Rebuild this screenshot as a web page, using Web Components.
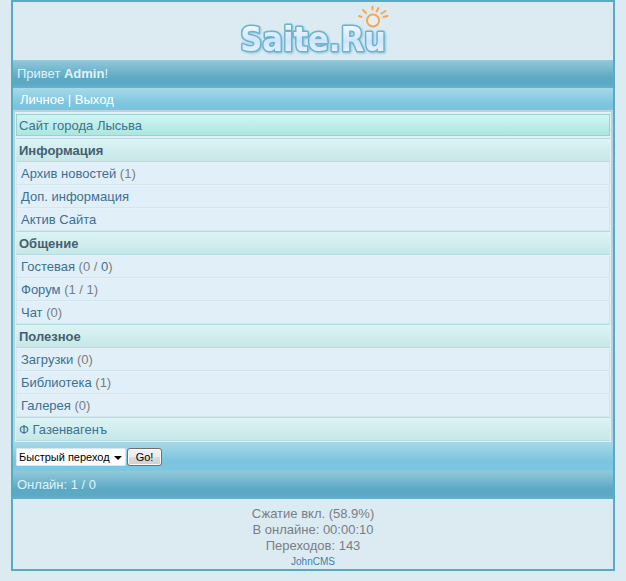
<!DOCTYPE html>
<html lang="ru">
<head>
<meta charset="utf-8">
<title>Saite.Ru</title>
<style>
  body { margin: 0 11px 10px; background: #dcebf2; color: #7a7d84; font: 13px/16px "Liberation Sans", Arial, sans-serif; }
</style>
</head>
<body>
<site-page>
  <site-logo slot="logo"></site-logo>
  <status-bar>Привет <b>Admin</b>!</status-bar>
  <user-menu></user-menu>
  <content-panel>
    <site-banner>Сайт города Лысьва</site-banner>
    <section-title heading>Информация</section-title>
    <menu-row label="Архив новостей">(1)</menu-row>
    <menu-row label="Доп. информация"></menu-row>
    <menu-row label="Актив Сайта"></menu-row>
    <section-title heading>Общение</section-title>
    <menu-row label="Гостевая">(0 / <counter-link>0</counter-link>)</menu-row>
    <menu-row label="Форум">(1 / 1)</menu-row>
    <menu-row label="Чат">(0)</menu-row>
    <section-title heading>Полезное</section-title>
    <menu-row label="Загрузки">(0)</menu-row>
    <menu-row label="Библиотека">(1)</menu-row>
    <menu-row label="Галерея">(0)</menu-row>
    <section-title>Ф Газенвагенъ</section-title>
  </content-panel>
  <quick-jump></quick-jump>
  <status-bar>Онлайн: 1 / 0</status-bar>
  <page-footer></page-footer>
</site-page>
<script>
const define = (name, markup, setup) => {
  const template = document.createElement('template');
  template.innerHTML = markup;
  customElements.define(name, class extends HTMLElement {
    constructor() {
      super();
      this.attachShadow({ mode: 'open' }).append(template.content.cloneNode(true));
    }
    connectedCallback() { if (setup) setup(this, this.shadowRoot); }
  });
};

define('site-page', `
<style>
  :host { display: block; border: 2px solid #56acc7; }
  header { display: flex; justify-content: center; height: 58px; }
</style>
<header><slot name="logo"></slot></header>
<slot></slot>`);

define('site-logo', `
<style>
  :host { display: block; }
  svg { display: block; overflow: visible; }
  text { font: bold 34px "DejaVu Sans Condensed", "DejaVu Sans", sans-serif; font-stretch: condensed; filter: drop-shadow(1px 1px 1px #8fc3dc); }
</style>
<svg width="156" height="58" viewBox="0 0 156 58" role="img" aria-label="Saite.Ru">
  <defs>
    <linearGradient id="ice" x1="0" y1="0" x2="0" y2="1">
      <stop offset="0.2" stop-color="#eef7ff"/><stop offset="0.55" stop-color="#cfe5fd"/><stop offset="0.8" stop-color="#e4f1ff"/>
    </linearGradient>
  </defs>
  <text x="78" y="49" text-anchor="middle" fill="url(#ice)" stroke="#6cb3d2" stroke-width="3" stroke-linejoin="round" paint-order="stroke">Saite.Ru</text>
  <g fill="none" stroke="#f9a553" stroke-linecap="round">
    <circle cx="138" cy="18.500" r="6" stroke-width="2" fill="#e8eff0"/>
    <path stroke-width="2" d="M124 14l2.500 1M128 8l3 3M137.500 4.500v3M143.500 6l-2 3.500M150.500 9l-4 2.500M152.500 14l-4 1"/>
  </g>
</svg>`);

define('status-bar', `
<style>
  :host { display: block; padding: 6px 4px; color: #dff3f9;
    background: linear-gradient(#93c8d9, #5ba9c5 65%, #5ba9c5 85%, #69b1cb); }
</style>
<slot></slot>`);

define('user-menu', `
<style>
  :host { display: block; padding: 4px 7px 2px; color: #fff; background: linear-gradient(#a6d8e9, #79c4de 80%); }
  a { color: inherit; text-decoration: none; }
</style>
<nav><a href="#personal">Личное</a> | <a href="#exit">Выход</a></nav>`);

define('content-panel', `
<style>
  :host { display: block; border: 2px solid #b7d3db; border-bottom: 0; padding: 2px 1px 1px; background: #e4eff5; }
</style>
<slot></slot>`);

define('site-banner', `
<style>
  :host { display: block; margin-bottom: 2px; padding: 3px 2px 1px; border: 1px solid #98d1d0;
    color: #3f7190; background: linear-gradient(#d0f5f4, #aae8df); }
</style>
<slot></slot>`);

define('section-title', `
<style>
  :host { display: block; padding: 4px 3px 2px; border: solid #b5dde1; border-width: 1px 0;
    color: #3f7190; background: linear-gradient(#dcf4f5, #c7e7e7); }
  h2 { margin: 0; font-size: 13px; line-height: 16px; color: #455f70; }
  a { color: inherit; text-decoration: none; }
</style>
<div></div>`, (host, root) => {
  const item = document.createElement(host.hasAttribute('heading') ? 'h2' : 'a');
  if (item.localName === 'a') item.href = '#ad';
  item.append(document.createElement('slot'));
  root.querySelector('div').replaceChildren(item);
});

define('menu-row', `
<style>
  :host { display: block; padding: 3px 4px; border: 1px solid #d3e6ee; border-top-color: #e6f2f8; background: #e1f0f8; line-height: 15px; }
  a { color: #3d6f95; text-decoration: none; }
</style>
<a href="#section"></a> <slot></slot>`, (host, root) => {
  root.querySelector('a').textContent = host.getAttribute('label');
});

define('counter-link', `
<style>
  :host { display: inline; }
  a { color: #3d6f95; text-decoration: none; }
</style>
<a href="#new"><slot></slot></a>`);

define('quick-jump', `
<style>
  :host { display: block; padding: 5px 3px 4px; background: linear-gradient(#a8d8e8, #79c4de 70%, #80c8e0); }
  form { display: flex; align-items: center; gap: 1px; height: 20px; }
  .pick { position: relative; display: flex; }
  select { appearance: none; box-sizing: border-box; width: 110px; height: 18px; margin: 0; padding: 0 14px 0 2px;
    border: 1px solid #d5e7ef; border-radius: 1px; background: #fff; color: #000; font: 11px "Liberation Sans", Arial, sans-serif; }
  svg { position: absolute; right: 4px; top: 8px; pointer-events: none; }
  button { box-sizing: border-box; width: 35px; height: 18px; padding: 0; border: 1px solid #707070; border-radius: 3px;
    background: linear-gradient(#f3f3f3, #ebebeb 50%, #dcdcdc 50%, #cfcfcf); box-shadow: inset 0 0 0 1px #fafafa;
    color: #000; font: 11px "Liberation Sans", Arial, sans-serif; }
</style>
<form>
  <span class="pick">
    <select aria-label="Быстрый переход"><option>Быстрый переход</option></select>
    <svg width="8" height="4" viewBox="0 0 8 4" aria-hidden="true"><path d="M0 0h8L4 4z"/></svg>
  </span>
  <button type="button">Go!</button>
</form>`);

define('page-footer', `
<style>
  :host { display: block; padding: 7px 4px 0; text-align: center; }
  p { margin: 0; }
  a { display: block; font-size: 10px; line-height: 15px; color: #3d7fa8; text-decoration: none; }
</style>
<footer>
  <p>Сжатие вкл. (58.9%)</p>
  <p>В онлайне: 00:00:10</p>
  <p>Переходов: 143</p>
  <a href="#johncms">JohnCMS</a>
</footer>`);
</script>
</body>
</html>
